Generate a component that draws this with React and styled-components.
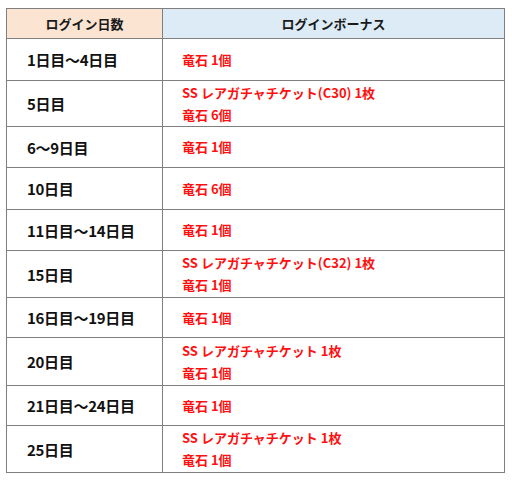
import React from 'react'
import styled, { createGlobalStyle } from 'styled-components'

const GlobalStyle = createGlobalStyle`
  body {
    margin: 0;
    background: #ffffff;
    font-family: "Noto Sans CJK JP", "Noto Sans", sans-serif;
  }
`;

const Wrap = styled.div`
  padding: 8px 0 0 6px;
`;

const Table = styled.table`
  width: 499px;
  border-collapse: collapse;
  table-layout: fixed;
  border: 1px solid #7f7f7f;
`;

const HeadCell = styled.th`
  height: 29px;
  padding: 0;
  border: 1px solid #7f7f7f;
  background: ${p => p.$bg};
  color: #1a1a1a;
  font-size: 13px;
  font-weight: 700;
  text-align: center;
  vertical-align: middle;
`;

const DayCell = styled.td`
  height: ${p => p.$h}px;
  padding: 0 0 0 20px;
  border: 1px solid #7f7f7f;
  color: #111;
  font-size: 15px;
  font-weight: 700;
  letter-spacing: -0.3px;
  vertical-align: middle;
`;

const BonusCell = styled.td`
  padding: 0 0 0 19px;
  border: 1px solid #7f7f7f;
  color: #ff1010;
  font-size: 13px;
  font-weight: 700;
  vertical-align: middle;
`;

const Line = styled.div`
  line-height: 22px;
  white-space: pre;
`;

const rows = [
  { day: '1日目～4日目', h: 41, bonus: ['竜石 1個'] },
  { day: '5日目', h: 45, bonus: ['SS レアガチャチケット(C30) 1枚', '竜石 6個'] },
  { day: '6～9日目', h: 40, bonus: ['竜石 1個'] },
  { day: '10日目', h: 41, bonus: ['竜石 6個'] },
  { day: '11日目～14日目', h: 40, bonus: ['竜石 1個'] },
  { day: '15日目', h: 46, bonus: ['SS レアガチャチケット(C32) 1枚', '竜石 1個'] },
  { day: '16日目～19日目', h: 39, bonus: ['竜石 1個'] },
  { day: '20日目', h: 47, bonus: ['SS レアガチャチケット 1枚', '竜石 1個'] },
  { day: '21日目～24日目', h: 39, bonus: ['竜石 1個'] },
  { day: '25日目', h: 46, bonus: ['SS レアガチャチケット 1枚', '竜石 1個'] },
];

function App() {
  return (
    <Wrap>
      <GlobalStyle />
      <Table>
        <colgroup>
          <col style={{ width: 156 }} />
          <col />
        </colgroup>
        <thead>
          <tr>
            <HeadCell $bg="#fce4d3">ログイン日数</HeadCell>
            <HeadCell $bg="#dcebf5">ログインボーナス</HeadCell>
          </tr>
        </thead>
        <tbody>
          {rows.map(r => (
            <tr key={r.day}>
              <DayCell $h={r.h}>{r.day}</DayCell>
              <BonusCell>
                {r.bonus.map(b => <Line key={b}>{b}</Line>)}
              </BonusCell>
            </tr>
          ))}
        </tbody>
      </Table>
    </Wrap>
  )
}

export default App;
